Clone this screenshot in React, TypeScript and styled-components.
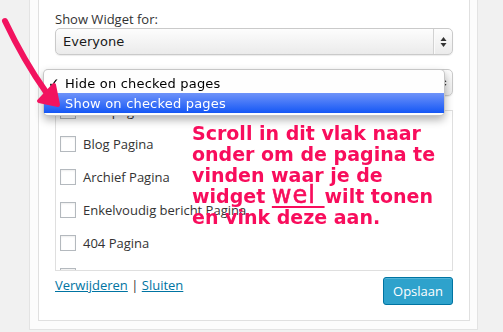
import React, { useLayoutEffect, useRef } from "react";
import styled, { createGlobalStyle } from "styled-components";

const Global = createGlobalStyle`
  html, body { margin: 0; padding: 0; background: #f1f1f1; }
  body { width: 503px; height: 332px; overflow: hidden; }
`;

const Page = styled.div`
  position: relative;
  width: 503px;
  height: 332px;
  overflow: hidden;
  background: #f1f1f1;
  padding-left: 29px;
  box-sizing: border-box;
`;

const OuterPanel = styled.div`
  box-sizing: border-box;
  width: 449px;
  height: 330px;
  background: #fcfcfc;
  border: 1px solid #e3e3e3;
  border-top: none;
  padding: 0 7px 8px 8px;
`;

const InnerPanel = styled.div`
  box-sizing: border-box;
  height: 321px;
  background: #fff;
  border: 1px solid #e0e0e0;
  border-top: none;
  padding: 10px 16px 0 16px;
  display: flex;
  flex-direction: column;
  font-family: "Open Sans", sans-serif;
  font-size: 13px;
  color: #333;
`;

const FieldLabel = styled.div`
  height: 18px;
  line-height: 18px;
  color: #333;
`;

const SelectWrap = styled.div<{ $gap?: number }>`
  position: relative;
  margin-top: ${(p) => p.$gap ?? 0}px;
`;

const SelectBox = styled.div`
  box-sizing: border-box;
  height: 27px;
  display: flex;
  align-items: center;
  border: 1px solid #cacaca;
  border-radius: 5px;
  background: linear-gradient(#fdfdfd, #ebebeb);
  box-shadow: 0 1px 1px rgba(0, 0, 0, 0.08);
  font-family: "DejaVu Sans", sans-serif;
  font-size: 13px;
  color: #1a1a1a;
`;

const SelectValue = styled.span`
  flex: 1;
  padding-left: 7px;
`;

const SelectArrows = styled.span`
  align-self: stretch;
  width: 18px;
  border-left: 1px solid #d2d2d2;
  box-shadow: inset 1px 0 0 #fafafa;
  display: flex;
  align-items: center;
  justify-content: center;
`;

const Menu = styled.div`
  position: absolute;
  left: -12px;
  top: 0;
  width: 402px;
  box-sizing: border-box;
  background: #fefefe;
  border: 1px solid rgba(0, 0, 0, 0.22);
  border-radius: 5px;
  box-shadow: 0 4px 9px rgba(0, 0, 0, 0.3);
  padding: 3px 0 2px;
  z-index: 2;
  font-family: "DejaVu Sans", sans-serif;
  font-size: 13px;
  letter-spacing: 0.2px;
`;

const MenuItem = styled.div<{ $active?: boolean }>`
  height: 20px;
  display: flex;
  align-items: center;
  padding-left: 4px;
  background: ${(p) => (p.$active ? "linear-gradient(#6f93f9, #1557f5)" : "transparent")};
  color: ${(p) => (p.$active ? "#fff" : "#000")};
`;

const Check = styled.span`
  width: 17px;
  font-size: 14px;
  font-weight: bold;
`;

const List = styled.div`
  box-sizing: border-box;
  height: 161px;
  margin-top: 14px;
  border: 1px solid #dfdfdf;
  background: #fff;
  overflow-y: auto;
  scrollbar-width: none;
  &::-webkit-scrollbar {
    display: none;
  }
`;

const Row = styled.label`
  display: flex;
  align-items: center;
  gap: 7px;
  height: 33px;
  padding-left: 4px;
  color: #333;
`;

const CheckBox = styled.span`
  box-sizing: border-box;
  width: 16px;
  height: 16px;
  border: 1px solid #b4b9be;
  background: #fff;
  box-shadow: inset 0 1px 2px rgba(0, 0, 0, 0.07);
`;

const Footer = styled.div`
  display: flex;
  justify-content: space-between;
  align-items: flex-start;
  margin-top: 6px;
`;

const Links = styled.div`
  line-height: 18px;
  margin-top: -1px;
  color: #333;
`;

const Link = styled.a`
  color: #0074a2;
  text-decoration: underline;
`;

const SaveButton = styled.button`
  box-sizing: border-box;
  width: 70px;
  height: 28px;
  border: 1px solid #0074a2;
  border-radius: 3px;
  background: #2ea2cc;
  box-shadow: inset 0 1px 0 rgba(120, 200, 230, 0.5);
  color: #fff;
  font-family: "Open Sans", sans-serif;
  font-size: 13px;
  padding: 0;
`;

const Note = styled.div`
  position: absolute;
  left: 192px;
  top: 123px;
  z-index: 3;
  font-family: "DejaVu Sans", Verdana, sans-serif;
  font-weight: bold;
  font-size: 19px;
  line-height: 21px;
  color: #f80d5c;
  white-space: nowrap;
`;

const Emph = styled.span`
  font-weight: normal;
  font-size: 24px;
  line-height: 0;
  letter-spacing: 1px;
  -webkit-text-stroke: 0.6px #f80d5c;
  text-decoration: underline;
  text-decoration-thickness: 2px;
  text-underline-offset: 3px;
`;

const ArrowSvg = styled.svg`
  position: absolute;
  left: 0;
  top: 0;
  z-index: 4;
`;

const Arrows = () => (
  <svg width="7" height="12" viewBox="0 0 7 12">
    <path d="M3.5 1 L6.5 5 L0.5 5 Z" fill="#333" />
    <path d="M3.5 11 L6.5 7 L0.5 7 Z" fill="#333" />
  </svg>
);

const rows = [
  "Voorpagina",
  "Blog Pagina",
  "Archief Pagina",
  "Enkelvoudig bericht Pagina",
  "404 Pagina",
  "Zoeken Pagina",
];

export default function App() {
  const listRef = useRef<HTMLDivElement>(null);
  useLayoutEffect(() => {
    if (listRef.current) listRef.current.scrollTop = 17;
  }, []);

  return (
    <>
      <Global />
      <Page>
        <OuterPanel>
          <InnerPanel>
            <FieldLabel>Show Widget for:</FieldLabel>
            <SelectWrap>
              <SelectBox>
                <SelectValue>Everyone</SelectValue>
                <SelectArrows>
                  <Arrows />
                </SelectArrows>
              </SelectBox>
            </SelectWrap>
            <SelectWrap $gap={14}>
              <SelectBox>
                <SelectValue>Hide on checked pages</SelectValue>
                <SelectArrows>
                  <Arrows />
                </SelectArrows>
              </SelectBox>
              <Menu>
                <MenuItem>
                  <Check>✓</Check>Hide on checked pages
                </MenuItem>
                <MenuItem $active>
                  <Check />Show on checked pages
                </MenuItem>
              </Menu>
            </SelectWrap>
            <List ref={listRef}>
              {rows.map((r) => (
                <Row key={r}>
                  <CheckBox />
                  {r}
                </Row>
              ))}
            </List>
            <Footer>
              <Links>
                <Link>Verwijderen</Link> | <Link>Sluiten</Link>
              </Links>
              <SaveButton>Opslaan</SaveButton>
            </Footer>
          </InnerPanel>
        </OuterPanel>
        <Note>
          Scroll in dit vlak naar
          <br />
          onder om de pagina te
          <br />
          vinden waar je de
          <br />
          widget <Emph>wel </Emph>wilt tonen
          <br />
          en vink deze aan.
        </Note>
        <ArrowSvg width="70" height="115" viewBox="0 0 70 115">
          <path
            d="M5 21 C 14 40, 26 64, 46 92"
            stroke="#f2135f"
            strokeWidth="6"
            strokeLinecap="round"
            fill="none"
          />
          <polygon
            points="58,105 39,101 54,85"
            fill="#f2135f"
            stroke="#f2135f"
            strokeWidth="4"
            strokeLinejoin="round"
          />
        </ArrowSvg>
      </Page>
    </>
  );
}
